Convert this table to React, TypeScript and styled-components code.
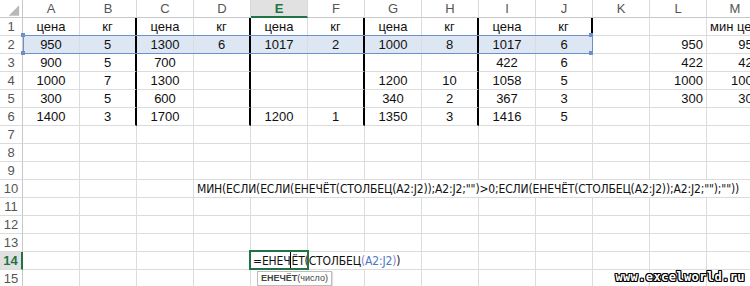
import styled, { createGlobalStyle } from "styled-components"

const GlobalStyle = createGlobalStyle`
	html, body {
		margin: 0;
		padding: 0;
		background: #fff;
		overflow: hidden;
	}
`

const COLS = ["A", "B", "C", "D", "E", "F", "G", "H", "I", "J", "K", "L", "M"]
const ROW_COUNT = 15
const ACTIVE_COL = 4
const ACTIVE_ROW = 14

// A..M for rows 1-6
const data: string[][] = [
	["цена", "кг", "цена", "кг", "цена", "кг", "цена", "кг", "цена", "кг", "", "", "мин цена"],
	["950", "5", "1300", "6", "1017", "2", "1000", "8", "1017", "6", "", "950", "950"],
	["900", "5", "700", "", "", "", "", "", "422", "6", "", "422", "422"],
	["1000", "7", "1300", "", "", "", "1200", "10", "1058", "5", "", "1000", "1000"],
	["300", "5", "600", "", "", "", "340", "2", "367", "3", "", "300", "300"],
	["1400", "3", "1700", "", "1200", "1", "1350", "3", "1416", "5", "", "", ""],
]

const FORMULA = 'МИН(ЕСЛИ(ЕСЛИ(ЕНЕЧЁТ(СТОЛБЕЦ(A2:J2));A2:J2;"")>0;ЕСЛИ(ЕНЕЧЁТ(СТОЛБЕЦ(A2:J2));A2:J2;"");""))'

const hasEdge = (row: number, col: number) => {
	if (row >= 1 && row <= 6 && (col === 1 || col === 3 || col === 5 || col === 7)) return true
	return row === 1 && col === 9
}

const alignFor = (row: number, col: number): "left" | "center" | "right" => {
	if (col <= 9) return "center"
	if (row === 1) return "left"
	return "right"
}

// in-cell editor of E14 with the function hint under it
function CellEditor() {
	return (
		<>
			<Editor>
				=ЕНЕЧ
				<Caret />
				ЁТ(СТОЛБЕЦ<Paren>(</Paren>
				<RefText>A2:J2</RefText>
				<Paren>)</Paren>)
			</Editor>
			<ActiveFrame />
			<Hint>
				<b>ЕНЕЧЁТ</b>(число)
			</Hint>
		</>
	)
}

export default function App() {
	const cells: React.ReactNode[] = []

	for (let r = 1; r <= ROW_COUNT; r++) {
		cells.push(
			<RowHeader key={`h${r}`} $active={r === ACTIVE_ROW}>
				{r}
			</RowHeader>
		)
		if (r === 10) {
			for (let c = 0; c < 3; c++) cells.push(<Cell key={`c${r}-${c}`} $align="center" />)
			cells.push(
				<Cell key={`c${r}-f`} $align="left" $span={10}>
					<FormulaText>{FORMULA}</FormulaText>
				</Cell>
			)
			continue
		}
		for (let c = 0; c < COLS.length; c++) {
			const value = data[r - 1]?.[c] ?? ""
			const isEdit = r === ACTIVE_ROW && c === ACTIVE_COL
			const isRefStart = r === 2 && c === 0
			cells.push(
				<Cell
					key={`c${r}-${c}`}
					$align={alignFor(r, c)}
					$edge={hasEdge(r, c)}
					$hl={r === 2 && c <= 9}
					$host={isEdit || isRefStart}>
					{value}
					{isRefStart && <RefBox />}
					{isEdit && <CellEditor />}
				</Cell>
			)
		}
	}

	return (
		<>
			<GlobalStyle />
			<Sheet>
				<Grid>
					<Corner>
						<svg width="23" height="18" viewBox="0 0 23 18">
							<polygon points="20,5 20,16 9,16" fill="#b8b8b8" />
						</svg>
					</Corner>
					{COLS.map((c, i) => (
						<ColHeader key={c} $active={i === ACTIVE_COL}>
							{c}
						</ColHeader>
					))}
					{cells}
				</Grid>

				<Watermark>www.excelworld.ru</Watermark>
			</Sheet>
		</>
	)
}

const Sheet = styled.div`
	position: relative;
	width: 750px;
	height: 286px;
	overflow: hidden;
	font-family: "Liberation Sans", Arial, sans-serif;
	font-size: 13px;
	color: #111;
`

const Grid = styled.div`
	display: grid;
	grid-template-columns: 23px repeat(13, 57px);
	grid-auto-rows: 18px;
	width: max-content;
`

const Corner = styled.div`
	box-sizing: border-box;
	border-right: 1px solid #c8c8c8;
	border-bottom: 1px solid #c8c8c8;
	background: #fff;
	display: flex;

	svg {
		display: block;
	}
`

const ColHeader = styled.div<{ $active?: boolean }>`
	box-sizing: border-box;
	display: flex;
	align-items: center;
	justify-content: center;
	background: ${(p) => (p.$active ? "#e1e1e1" : "#fff")};
	color: ${(p) => (p.$active ? "#217346" : "#555")};
	font-weight: ${(p) => (p.$active ? "bold" : "normal")};
	border-right: 1px solid #d8d8d8;
	border-bottom: ${(p) => (p.$active ? "2px solid #217346" : "1px solid #c8c8c8")};
`

const RowHeader = styled.div<{ $active?: boolean }>`
	box-sizing: border-box;
	display: flex;
	align-items: center;
	justify-content: center;
	background: ${(p) => (p.$active ? "#e1e1e1" : "#fff")};
	color: ${(p) => (p.$active ? "#217346" : "#555")};
	font-weight: ${(p) => (p.$active ? "bold" : "normal")};
	border-right: ${(p) => (p.$active ? "2px solid #217346" : "1px solid #c8c8c8")};
	border-bottom: 1px solid #dadcdd;
`

const Cell = styled.div<{
	$align: "left" | "center" | "right"
	$edge?: boolean
	$hl?: boolean
	$span?: number
	$host?: boolean
}>`
	box-sizing: border-box;
	position: ${(p) => (p.$host ? "relative" : "static")};
	z-index: ${(p) => (p.$host ? 2 : "auto")};
	grid-column: ${(p) => (p.$span ? `span ${p.$span}` : "auto")};
	display: flex;
	align-items: center;
	justify-content: ${(p) => (p.$align === "left" ? "flex-start" : p.$align === "right" ? "flex-end" : "center")};
	padding: 0 3px;
	white-space: nowrap;
	overflow: visible;
	line-height: 18px;
	background: ${(p) => (p.$hl ? "#dde7f4" : "transparent")};
	border-right: ${(p) => (p.$edge ? "2px solid #000" : p.$span ? "none" : "1px solid #dadcdd")};
	border-bottom: 1px solid ${(p) => (p.$hl ? "#c7d4e9" : "#dadcdd")};
`

// Excel shows formula text in narrow Calibri, so a condensed face stands in
const FormulaText = styled.span`
	font-family: "Liberation Sans Narrow", "DejaVu Sans Condensed", "Liberation Sans", sans-serif;
	font-size: 12px;
	letter-spacing: -0.15px;
`

// blue frame around the referenced range A2:J2, with corner handles
const RefBox = styled.span`
	position: absolute;
	left: 0;
	top: -1px;
	width: 570px;
	height: 19px;
	box-sizing: border-box;
	border: 1px solid #6f8fca;
	pointer-events: none;

	&::before {
		content: "";
		position: absolute;
		left: -3px;
		top: -3px;
		width: 4px;
		height: 4px;
		background: #6f8fca;
		box-shadow:
			0 18px 0 #6f8fca,
			568px 0 0 #6f8fca,
			568px 18px 0 #6f8fca;
	}
`

const Editor = styled.span`
	position: absolute;
	left: 0;
	top: 0;
	height: 17px;
	padding: 0 6px 0 2px;
	background: #fff;
	line-height: 18px;
	white-space: nowrap;
	color: #111;
	font-family: "Liberation Sans Narrow", "DejaVu Sans Condensed", "Liberation Sans", sans-serif;
	font-size: 12px;
	letter-spacing: -0.15px;
`

const Caret = styled.span`
	display: inline-block;
	width: 0;
	height: 16px;
	vertical-align: -3px;
	border-left: 1px solid #000;
`

const Paren = styled.span`
	color: #9b7fc6;
`

const RefText = styled.span`
	color: #4a78c8;
`

const ActiveFrame = styled.span`
	position: absolute;
	left: -2px;
	top: -2px;
	width: 60px;
	height: 20px;
	box-sizing: border-box;
	border: 2px solid #217346;
	pointer-events: none;
`

const Hint = styled.span`
	position: absolute;
	left: 6px;
	top: 19px;
	padding: 0 3px;
	height: 13px;
	line-height: 13px;
	font-size: 9px;
	color: #444;
	background: #fff;
	border: 1px solid #bcbcbc;
	box-shadow: 1px 1px 1px rgba(0, 0, 0, 0.12);

	b {
		font-weight: bold;
	}
`

const Watermark = styled.div`
	position: absolute;
	right: 5px;
	bottom: 2px;
	font-family: "DejaVu Sans Mono", monospace;
	font-weight: bold;
	font-size: 12px;
	letter-spacing: 0.4px;
	line-height: 13px;
	color: #fff;
	text-shadow:
		1px 0 0 #000,
		-1px 0 0 #000,
		0 1px 0 #000,
		0 -1px 0 #000,
		1px 1px 0 #000,
		-1px -1px 0 #000,
		1px -1px 0 #000,
		-1px 1px 0 #000;
`
